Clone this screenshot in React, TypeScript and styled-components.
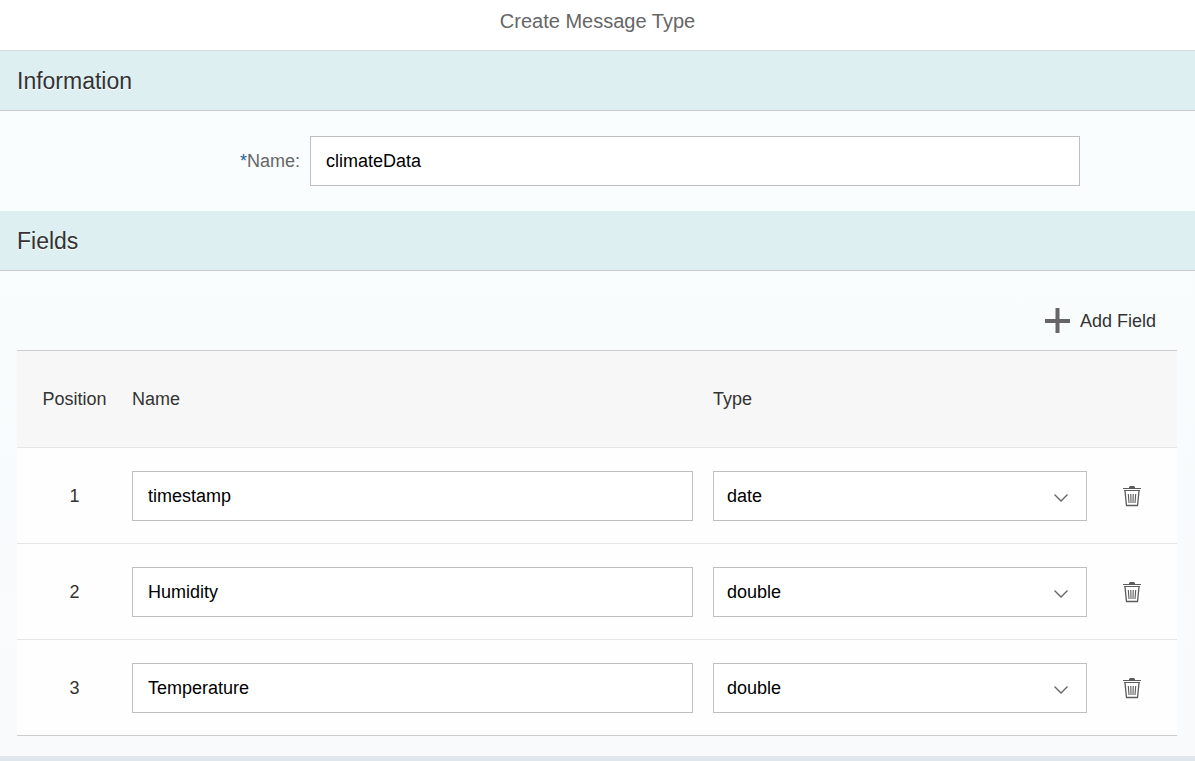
import React from "react";
import styled, { createGlobalStyle } from "styled-components";

const GlobalStyle = createGlobalStyle`
  *, *::before, *::after { box-sizing: border-box; }
  body {
    margin: 0;
    background: #dfe7ed;
    color: #333;
    font: 18px/24px "Liberation Sans", Arial, sans-serif;
  }
  input, select, button { font: inherit; }
`;

const Dialog = styled.main`
  padding-bottom: 20px;
  background: linear-gradient(#f9fdfd 111px, #f8fcfd 50%, #f9fafc);
  border-bottom: 5px solid #dfe7ed;
`;

const TitleBar = styled.header`
  height: 51px;
  padding-top: 9px;
  background: #fff;
  border-bottom: 1px solid #d9d9d9;
  text-align: center;
`;

const Title = styled.h1`
  margin: 0;
  color: #666;
  font-size: 20px;
  font-weight: 400;
  line-height: 24px;
`;

const SectionTitle = styled.h2`
  display: flex;
  align-items: center;
  height: 60px;
  margin: 0;
  padding: 0 17px;
  background: #ddeff1;
  border-bottom: 1px solid #ccc;
  font-size: 23px;
  font-weight: 400;
  text-shadow: 0 1px 0 #fff;
`;

const FormRow = styled.div`
  display: grid;
  grid-template-columns: 30fr 77fr;
  align-items: center;
  gap: 10px;
  padding: 25px 115px 25px 0;
`;

const Label = styled.label`
  color: #666;
  text-align: right;
`;

const Required = styled.span`
  color: #1c5c9c;
`;

const TextInput = styled.input`
  display: block;
  width: 100%;
  height: 50px;
  padding: 0 15px;
  background: #fff;
  border: 1px solid #bfbfbf;
  border-radius: 0;
  color: #000;
  outline: none;
`;

const Toolbar = styled.div`
  display: flex;
  align-items: center;
  justify-content: flex-end;
  height: 79px;
  padding: 20px 39px 0;
`;

const AddButton = styled.button`
  display: flex;
  align-items: center;
  gap: 10px;
  padding: 0;
  background: none;
  border: 0;
  color: #333;
  cursor: pointer;
`;

const TableWrap = styled.div`
  padding: 0 18px 0 17px;
`;

const Table = styled.table`
  width: 100%;
  table-layout: fixed;
  border-collapse: separate;
  border-spacing: 0;
  background: #fefefe;
  border-top: 1px solid #ccc;
  border-bottom: 1px solid #ccc;
`;

const HeadCell = styled.th<{ $width?: number; $center?: boolean }>`
  width: ${(p) => (p.$width ? `${p.$width}px` : "auto")};
  height: 96px;
  padding: 0;
  background: #f7f7f7;
  font-weight: 400;
  text-align: ${(p) => (p.$center ? "center" : "left")};
`;

const Cell = styled.td<{ $center?: boolean; $gap?: boolean }>`
  padding: 23px ${(p) => (p.$gap ? 20 : 0)}px 22px 0;
  border-top: 1px solid #e5e5e5;
  text-align: ${(p) => (p.$center ? "center" : "left")};
`;

const SelectBox = styled.div`
  position: relative;
`;

const Select = styled.select`
  display: block;
  width: 100%;
  height: 50px;
  padding: 0 40px 0 13px;
  appearance: none;
  background: #fff;
  border: 1px solid #bfbfbf;
  border-radius: 0;
  color: #000;
  outline: none;
`;

const Chevron = styled.svg`
  position: absolute;
  top: 22px;
  right: 18px;
  pointer-events: none;
`;

const DeleteButton = styled.button`
  display: inline-flex;
  padding: 4px;
  background: none;
  border: 0;
  vertical-align: middle;
  cursor: pointer;
`;

const PlusIcon = () => (
  <svg width="25" height="25" viewBox="0 0 25 25" fill="none" stroke="#666" strokeWidth="4" aria-hidden="true">
    <path d="M0 13H25M12.5 0V25" />
  </svg>
);

const TrashIcon = () => (
  <svg width="18" height="22" viewBox="0 0 18 22" fill="none" stroke="#5c5c5c" aria-hidden="true">
    <path d="M6 3V2L7 1H11L12 2V3Z" fill="#5c5c5c" stroke="none" />
    <path d="M0 3.5H18M1 5.5H17" />
    <path d="M2 6L3.5 20.5H14.5L16 6" strokeWidth="1.3" />
    <path d="M5.3 9L6 18M7.8 9L8 18M10.2 9L10 18M12.7 9L12 18" strokeWidth="1.1" />
  </svg>
);

const types = ["date", "double"];

const fields = [
  { name: "timestamp", type: "date" },
  { name: "Humidity", type: "double" },
  { name: "Temperature", type: "double" },
];

export default function App() {
  return (
    <>
      <GlobalStyle />
      <Dialog>
        <TitleBar>
          <Title>Create Message Type</Title>
        </TitleBar>
        <section>
          <SectionTitle>Information</SectionTitle>
          <FormRow>
            <Label htmlFor="message-name">
              <Required>*</Required>Name:
            </Label>
            <TextInput id="message-name" required defaultValue="climateData" />
          </FormRow>
        </section>
        <section>
          <SectionTitle>Fields</SectionTitle>
          <Toolbar>
            <AddButton type="button">
              <PlusIcon />
              Add Field
            </AddButton>
          </Toolbar>
          <TableWrap>
            <Table>
              <thead>
                <tr>
                  <HeadCell $width={115} $center>Position</HeadCell>
                  <HeadCell>Name</HeadCell>
                  <HeadCell $width={374}>Type</HeadCell>
                  <HeadCell $width={90} aria-label="Actions" />
                </tr>
              </thead>
              <tbody>
                {fields.map((field, i) => (
                  <tr key={field.name}>
                    <Cell $center>{i + 1}</Cell>
                    <Cell $gap>
                      <TextInput aria-label={`Name ${i + 1}`} defaultValue={field.name} />
                    </Cell>
                    <Cell>
                      <SelectBox>
                        <Select aria-label={`Type ${i + 1}`} defaultValue={field.type}>
                          {types.map((t) => (
                            <option key={t}>{t}</option>
                          ))}
                        </Select>
                        <Chevron width="16" height="10" viewBox="0 0 16 10" fill="none" stroke="#666" strokeWidth="1.4" aria-hidden="true">
                          <path d="M1.5 1.5L8 8L14.5 1.5" />
                        </Chevron>
                      </SelectBox>
                    </Cell>
                    <Cell $center>
                      <DeleteButton type="button" aria-label={`Delete ${field.name}`}>
                        <TrashIcon />
                      </DeleteButton>
                    </Cell>
                  </tr>
                ))}
              </tbody>
            </Table>
          </TableWrap>
        </section>
      </Dialog>
    </>
  );
}
